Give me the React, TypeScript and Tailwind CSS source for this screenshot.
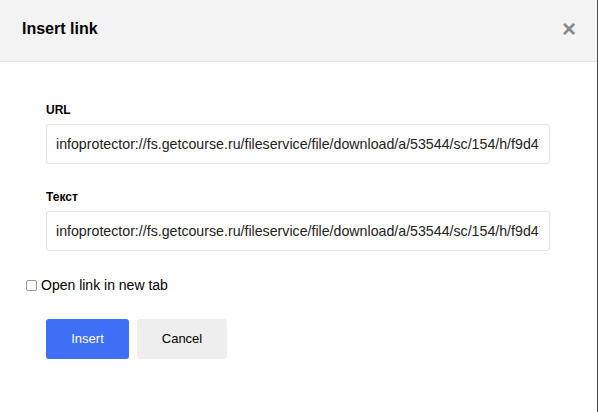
import React from 'react';

const LINK =
  'infoprotector://fs.getcourse.ru/fileservice/file/download/a/53544/sc/154/h/f9d477c2a1b0e8d4f5a6c7b8e9f0a1b2';

const Field: React.FC<{ label: string; value: string; className?: string }> = ({
  label,
  value,
  className,
}) => (
  <div className={className}>
    <div className="text-[12px] font-bold leading-[14px] text-black">{label}</div>
    <input
      type="text"
      readOnly
      value={value}
      className="mt-[7px] block h-[40px] w-[504px] rounded-[3px] border border-[#e3e3e3] bg-white px-[9px] text-[14.2px] text-[#222] outline-none"
    />
  </div>
);

const App: React.FC = () => {
  return (
    <div
      className="flex h-[412px] w-[599px] bg-white"
      style={{ fontFamily: '"Liberation Sans", Arial, sans-serif' }}
    >
      <div className="flex h-full w-[598px] flex-col border-r border-[#4f4f4f]">
        <div className="flex h-[62px] shrink-0 items-center justify-between border-b border-[#e6e6e6] bg-[#f3f3f3] pl-[22px] pr-[21px]">
          <h2 className="-mt-[3px] text-[16px] font-bold text-black">Insert link</h2>
          <span className="-mt-[4px] text-[24px] font-bold leading-none text-[#8a8a8a]">×</span>
        </div>
        <div className="flex flex-col">
          <Field label="URL" value={LINK} className="ml-[46px] mt-[41px]" />
          <Field label="Текст" value={LINK} className="ml-[46px] mt-[26px]" />
          <label className="ml-[26px] mt-[24px] flex h-[21px] items-center gap-[4px] text-[14px] text-black">
            <span className="block h-[11px] w-[11px] rounded-[2px] border border-[#9a9a9a] bg-white" />
            Open link in new tab
          </label>
          <div className="ml-[46px] mt-[23px] flex gap-[8px]">
            <button
              type="button"
              className="h-[40px] w-[83px] rounded-[3px] bg-[#3e6ff4] text-[13px] text-white"
            >
              Insert
            </button>
            <button
              type="button"
              className="h-[40px] w-[90px] rounded-[3px] bg-[#eeeeee] text-[13px] text-black"
            >
              Cancel
            </button>
          </div>
        </div>
      </div>
    </div>
  );
};

export default App;
